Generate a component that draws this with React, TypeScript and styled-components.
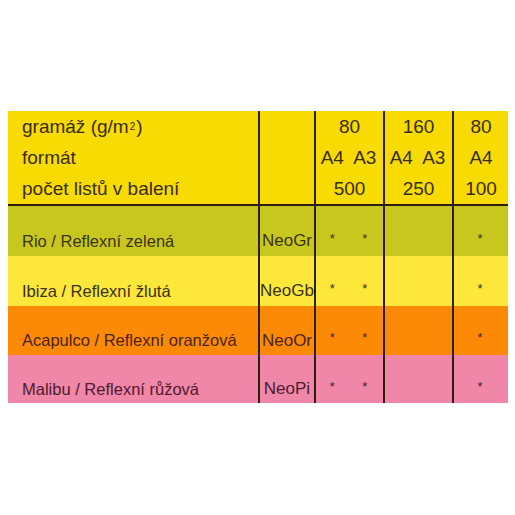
import React from "react";
import styled, { createGlobalStyle } from "styled-components";

const GlobalStyle = createGlobalStyle`
  html, body {
    margin: 0;
    padding: 0;
    background: #ffffff;
  }
  body {
    font-family: "Liberation Sans", Arial, sans-serif;
  }
`;

const LINE = "#2b1f0c";

type Paper = {
  name: string;
  code: string;
  bg: string;
  ink: string;
  height: number;
};

const papers: Paper[] = [
  { name: "Rio / Reflexní zelená", code: "NeoGr", bg: "#c8c71f", ink: "#3a3410", height: 50 },
  { name: "Ibiza / Reflexní žlutá", code: "NeoGb", bg: "#fde73b", ink: "#3a3012", height: 50 },
  { name: "Acapulco / Reflexní oranžová", code: "NeoOr", bg: "#fc8a06", ink: "#4a2410", height: 49 },
  { name: "Malibu / Reflexní růžová", code: "NeoPi", bg: "#f087a9", ink: "#4f1a2c", height: 48 },
];

export default function App() {
  return (
    <>
      <GlobalStyle />
      <Page>
        <Table>
          <Header>
            <LabelCell>
              <HeadLine>
                gramáž (g/m<Sup>2</Sup>)
              </HeadLine>
              <HeadLine>formát</HeadLine>
              <HeadLine>počet listů v balení</HeadLine>
            </LabelCell>
            <Cell />
            <Cell>
              <HeadLine $center>80</HeadLine>
              <HeadLine>
                <Halves>
                  <Half>A4</Half>
                  <Half>A3</Half>
                </Halves>
              </HeadLine>
              <HeadLine $center>500</HeadLine>
            </Cell>
            <Cell>
              <HeadLine $center>160</HeadLine>
              <HeadLine>
                <Halves>
                  <Half>A4</Half>
                  <Half>A3</Half>
                </Halves>
              </HeadLine>
              <HeadLine $center>250</HeadLine>
            </Cell>
            <Cell>
              <HeadLine $center>80</HeadLine>
              <HeadLine $center>A4</HeadLine>
              <HeadLine $center>100</HeadLine>
            </Cell>
          </Header>
          {papers.map((p) => (
            <Row key={p.code} $bg={p.bg} $ink={p.ink} $h={p.height}>
              <LabelCell>
                <RowText>{p.name}</RowText>
              </LabelCell>
              <Cell>
                <Code>{p.code}</Code>
              </Cell>
              <Cell>
                <Halves>
                  <Star>*</Star>
                  <Star>*</Star>
                </Halves>
              </Cell>
              <Cell />
              <Cell>
                <Halves>
                  <Star>*</Star>
                </Halves>
              </Cell>
            </Row>
          ))}
        </Table>
      </Page>
    </>
  );
}

const Page = styled.div`
  width: 515px;
  height: 515px;
  padding: 111px 7px 0 8px;
  box-sizing: border-box;
`;

const Table = styled.div`
  width: 500px;
  display: flex;
  flex-direction: column;
`;

const columns = "250px 56px 69px 69px 56px";

const Header = styled.div`
  display: grid;
  grid-template-columns: ${columns};
  height: 95px;
  background: #f7db02;
  color: #3a2c12;
  border-bottom: 2px solid ${LINE};
  box-sizing: border-box;
`;

const Row = styled.div<{ $bg: string; $ink: string; $h: number }>`
  display: grid;
  grid-template-columns: ${columns};
  height: ${(p) => p.$h}px;
  background: ${(p) => p.$bg};
  color: ${(p) => p.$ink};
`;

const LabelCell = styled.div`
  display: flex;
  flex-direction: column;
  padding-left: 14px;
`;

const Cell = styled.div`
  display: flex;
  flex-direction: column;
  border-left: 2px solid ${LINE};
`;

const HeadLine = styled.div<{ $center?: boolean }>`
  height: 31px;
  display: flex;
  align-items: center;
  justify-content: ${(p) => (p.$center ? "center" : "flex-start")};
  font-size: 19px;
  white-space: nowrap;
`;

const Sup = styled.sup`
  font-size: 10px;
  vertical-align: 9px;
  margin: 0 1px 0 1px;
`;

const Halves = styled.div`
  flex: 1;
  display: flex;
  padding-right: 2px;
`;

const Half = styled.span`
  flex: 1;
  display: flex;
  align-items: center;
  justify-content: center;
`;

const RowText = styled.div`
  height: 100%;
  display: flex;
  align-items: center;
  padding-top: 20px;
  box-sizing: border-box;
  font-size: 16.5px;
  white-space: nowrap;
`;

const Code = styled.div`
  height: 100%;
  display: flex;
  align-items: center;
  justify-content: center;
  padding-top: 20px;
  box-sizing: border-box;
  font-size: 17px;
`;

const Star = styled.span`
  flex: 1;
  display: flex;
  align-items: center;
  justify-content: center;
  padding-top: 14px;
  font-size: 13px;
`;
